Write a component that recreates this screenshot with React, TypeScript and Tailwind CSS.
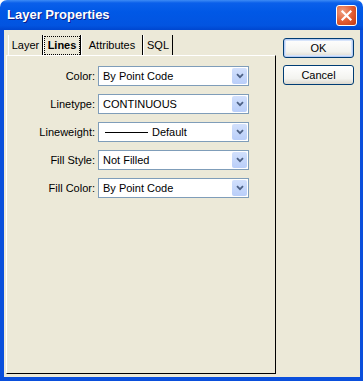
const rows = [
  { label: 'Color:', value: 'By Point Code' },
  { label: 'Linetype:', value: 'CONTINUOUS' },
  { label: 'Lineweight:', value: 'Default', line: true },
  { label: 'Fill Style:', value: 'Not Filled' },
  { label: 'Fill Color:', value: 'By Point Code' },
];

const tabs = [
  { name: 'Layer', w: 'w-[35px]' },
  { name: 'Lines', w: 'w-[38px]', active: true },
  { name: 'Attributes', w: 'w-[62px]' },
  { name: 'SQL', w: 'w-[30px]' },
];

function CloseButton() {
  return (
    <div className="w-[21px] h-[21px] rounded-[3px] border border-white bg-[radial-gradient(circle_at_30%_30%,#F0A080,#E05A30_55%,#C23A14)] flex items-center justify-center">
      <svg width="13" height="13" viewBox="0 0 13 13">
        <path d="M2.5 2.5 L10.5 10.5 M10.5 2.5 L2.5 10.5" stroke="#fff" strokeWidth="2.2" strokeLinecap="square" />
      </svg>
    </div>
  );
}

function Combo({ value, line }: { value: string; line?: boolean }) {
  return (
    <div className="h-[20px] w-[151px] border border-[#7F9DB9] bg-white flex items-center p-[1px]">
      <div className="flex-1 flex items-center pl-[3px] leading-none whitespace-nowrap">
        {line && <span className="inline-block w-[43px] h-[1px] bg-black ml-[2px] mr-[4px]" />}
        {value}
      </div>
      <div className="w-[15px] h-[16px] rounded-[2px] bg-[linear-gradient(to_bottom,#D2E0FC,#B9CEF9)] flex items-center justify-center">
        <svg width="8" height="6" viewBox="0 0 8 6">
          <path d="M1 1.2 L4 4.2 L7 1.2" stroke="#4D6185" strokeWidth="1.8" fill="none" />
        </svg>
      </div>
    </div>
  );
}

function XpButton({ label, isDefault }: { label: string; isDefault?: boolean }) {
  return (
    <div
      className={`w-[71px] h-[20px] rounded-[3px] border border-[#003C74] bg-[linear-gradient(to_bottom,#FFFFFF,#F3F3EF_70%,#DCD8CE)] flex items-center justify-center ${
        isDefault ? 'shadow-[inset_0_0_0_1px_#B7CDF5,inset_0_0_0_2px_#D7E4FA]' : ''
      }`}
    >
      {label}
    </div>
  );
}

export default function App() {
  return (
    <div className="w-[363px] h-[381px] flex flex-col bg-white text-[11px] text-black font-['Liberation_Sans',Arial,sans-serif]">
      <div className="h-[30px] shrink-0 rounded-t-[7px] bg-[linear-gradient(to_bottom,#3D8BF5_0px,#0A5FEA_3px,#0058E6_40%,#0254E0_85%,#0046CF_100%)] flex items-center justify-between pl-[7px] pr-[6px]">
        <span className="font-bold text-[13px] text-white [text-shadow:1px_1px_0_#0A1E8A]">Layer Properties</span>
        <CloseButton />
      </div>

      <div className="flex-1 flex bg-[#ECE9D8] border-l-[4px] border-r-[3px] border-b-[4px] border-[#0A4FDC] pt-[5px] pl-[2px]">
        <div className="w-[270px] flex flex-col pb-[3px]">
          <div className="h-[20px] flex pl-[2px]">
            {tabs.map((t) => (
              <div
                key={t.name}
                className={`${t.w} h-full border-l border-l-white border-r border-r-black flex items-center justify-center`}
              >
                {t.active ? (
                  <span className="h-[19px] w-full border border-dotted border-black flex items-center justify-center font-bold">
                    {t.name}
                  </span>
                ) : (
                  t.name
                )}
              </div>
            ))}
          </div>
          <div className="flex-1 border-t border-l border-t-white border-l-white border-r border-b border-r-black border-b-black pt-[10px]">
            <div className="grid grid-cols-[88px_151px] gap-x-[3px] gap-y-[8px]">
              {rows.map((r) => (
                <div key={r.label} className="contents">
                  <div className="h-[20px] flex items-center justify-end">{r.label}</div>
                  <Combo value={r.value} line={r.line} />
                </div>
              ))}
            </div>
          </div>
        </div>

        <div className="pl-[7px] pt-[3px] flex flex-col gap-[7px]">
          <XpButton label="OK" isDefault />
          <XpButton label="Cancel" />
        </div>
      </div>
    </div>
  );
}
